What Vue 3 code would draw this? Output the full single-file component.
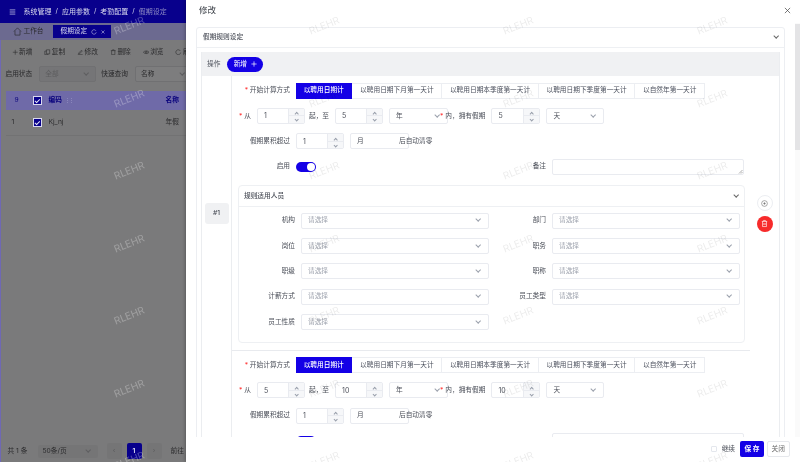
<template>
  <div class="screen">
    <!-- page behind the drawer, colours already dimmed by the mask -->
    <div class="page">
      <header class="topbar">
        <svg class="menu-icon" viewBox="0 0 10 8"><path d="M1 1h8M1 4h8M1 7h8" /></svg>
        <template v-for="(crumb, i) in crumbs" :key="crumb">
          <span v-if="i" class="crumb-sep">/</span>
          <span class="crumb" :class="{ last: i === crumbs.length - 1 }">{{ crumb }}</span>
        </template>
      </header>
      <div class="tabs">
        <div class="tab-home">
          <svg class="home-icon" viewBox="0 0 10 10"><path d="M1 5 5 1l4 4M2.200 4.200V9h5.600V4.200" /></svg>
          <span>工作台</span>
        </div>
        <div class="tab-active">
          <span>假期设定</span>
          <svg class="tab-icon" viewBox="0 0 8 8"><path d="M6.600 2.400A3 3 0 1 0 7 4.400" /></svg>
          <svg class="tab-icon" viewBox="0 0 8 8"><path d="m2 2 4 4M6 2 2 6" /></svg>
        </div>
      </div>
      <div class="toolbar">
        <span class="tool">
          <svg viewBox="0 0 8 8"><path d="M4 1v6M1 4h6" /></svg>新增
        </span>
        <span class="tool">
          <svg viewBox="0 0 8 8"><path d="M3 1h4v5H3zM3 2.500H1V7h4V6" /></svg>复制
        </span>
        <span class="tool">
          <svg viewBox="0 0 8 8"><path d="M1 7h6M2 5l3.500-3.500 1 1L3 6H2z" /></svg>修改
        </span>
        <span class="tool">
          <svg viewBox="0 0 8 8"><path d="M1 2h6M3 2V1h2v1M2 2v5h4V2" /></svg>删除
        </span>
        <span class="tool">
          <svg viewBox="0 0 8 8"><path d="M.5 4C2 1.800 6 1.800 7.500 4 6 6.200 2 6.200.5 4z" /><circle cx="4" cy="4" r="1" /></svg>浏览
        </span>
        <span class="tool">
          <svg viewBox="0 0 8 8"><path d="M6.600 2.400A3 3 0 1 0 7 4.400" /></svg>刷新
        </span>
      </div>
      <div class="filters">
        <span>启用状态</span>
        <div class="page-select disabled"><span>全部</span><i class="chev"></i></div>
        <span class="filter-label">快速查询</span>
        <div class="page-select"><span>名称</span><i class="chev"></i></div>
      </div>
      <div class="table">
        <div class="table-row table-head">
          <span class="col-seq">9</span>
          <span class="col-check"><i class="page-check"></i></span>
          <span class="col-code">编码<i class="sort"></i></span>
          <span>名称</span>
        </div>
        <div class="table-row">
          <span class="col-seq num">1</span>
          <span class="col-check"><i class="page-check"></i></span>
          <span class="col-code">Kj_nj</span>
          <span>年假</span>
        </div>
      </div>
      <div class="pager">
        <span class="pager-total">共 1 条</span>
        <div class="pager-size"><span>50条/页</span><i class="chev"></i></div>
        <span class="pager-btn">‹</span>
        <span class="pager-btn current">1</span>
        <span class="pager-btn">›</span>
        <span class="pager-goto">前往</span>
      </div>
    </div>

    <!-- drawer -->
    <aside class="drawer">
      <div class="drawer-title">
        <span>修改</span>
        <svg class="close-icon" viewBox="0 0 8 8"><path d="m1 1 6 6M7 1 1 7" /></svg>
      </div>
      <div class="drawer-body">
        <div class="drawer-scroll">
          <section class="card">
            <div class="card-head">
              <span>假期规则设定</span>
              <i class="chev"></i>
            </div>
            <div class="card-body">
              <div class="rule-table">
                <div class="ops">
                  <span>操作</span>
                  <button class="add-btn">新增<svg viewBox="0 0 8 8"><path d="M4 .5v7M.5 4h7" /></svg></button>
                </div>
                <div v-for="(rule, idx) in rules" :key="idx" class="rule">
                  <div class="rule-tag"><span v-if="!idx">#{{ idx + 1 }}</span></div>
                  <div class="rule-main">
                    <div class="row">
                      <label class="lab"><em>*</em> 开始计算方式</label>
                      <div class="btn-group">
                        <span
                          v-for="(m, i) in modes"
                          :key="m"
                          class="mode"
                          :class="{ on: i === 0 }"
                        >{{ m }}</span>
                      </div>
                    </div>
                    <div class="row">
                      <label class="lab short"><em>*</em> 从</label>
                      <div class="num-input"><span>{{ rule.from }}</span><div class="spin"><i class="up"></i><i></i></div></div>
                      <span class="text-mid">起，至</span>
                      <div class="num-input"><span>{{ rule.to }}</span><div class="spin"><i class="up"></i><i></i></div></div>
                      <div class="select unit"><span>年</span><i class="chev"></i></div>
                      <span class="text-own"><em>*</em> 内，拥有假期</span>
                      <div class="num-input wide"><span>{{ rule.days }}</span><div class="spin"><i class="up"></i><i></i></div></div>
                      <div class="select unit-day"><span>天</span><i class="chev"></i></div>
                    </div>
                    <div class="row">
                      <label class="lab">假期累积超过</label>
                      <div class="num-input"><span>1</span><div class="spin"><i class="up"></i><i></i></div></div>
                      <div class="select unit"><span>月</span></div>
                      <span class="text-clear">后自动清零</span>
                    </div>
                    <div class="row">
                      <label class="lab"><template v-if="!idx">启用</template></label>
                      <span class="switch"><i></i></span>
                      <label class="remark-label"><template v-if="!idx">备注</template></label>
                      <div class="remark">
                        <svg viewBox="0 0 5 5"><path d="M4.500 1 1 4.500M4.500 3 3 4.500" /></svg>
                      </div>
                    </div>
                    <section v-if="!idx" class="people">
                      <div class="people-head">
                        <span>规则适用人员</span>
                        <i class="chev"></i>
                      </div>
                      <div class="people-grid">
                        <div v-for="f in people" :key="f" class="field">
                          <label>{{ f }}</label>
                          <div class="select"><span class="ph">请选择</span><i class="chev"></i></div>
                        </div>
                      </div>
                    </section>
                  </div>
                  <div class="rule-actions">
                    <template v-if="!idx">
                      <span class="round">
                        <svg viewBox="0 0 10 10"><circle cx="5" cy="5" r="3.200" /><circle class="dot" cx="5" cy="5" r=".8" /></svg>
                      </span>
                      <span class="round danger">
                        <svg viewBox="0 0 10 10"><path d="M2 2.700h6M4 2.700V1.600h2v1.100M2.800 2.700v5.700h4.400V2.700M4.300 4.500v2.200M5.700 4.500v2.200" /></svg>
                      </span>
                    </template>
                  </div>
                </div>
              </div>
            </div>
          </section>
        </div>
        <div class="scrollbar"><div class="thumb"></div></div>
      </div>
      <footer class="drawer-foot">
        <span class="check-box"></span>
        <span class="continue">继续</span>
        <button class="save">保 存</button>
        <button class="cancel">关闭</button>
      </footer>
    </aside>

    <!-- watermark -->
    <div class="watermarks">
      <span v-for="n in 28" :key="n" class="mark">RLEHR</span>
    </div>
  </div>
</template>

<script setup>
const crumbs = ['系统管理', '应用参数', '考勤配置', '假期设定']

const modes = [
  '以聘用日期计',
  '以聘用日期下月第一天计',
  '以聘用日期本季度第一天计',
  '以聘用日期下季度第一天计',
  '以自然年第一天计'
]

const rules = [
  { from: 1, to: 5, days: 5 },
  { from: 5, to: 10, days: 10 }
]

const people = ['机构', '部门', '岗位', '职务', '职级', '职称', '计薪方式', '员工类型', '员工性质']
</script>

<style>
html,
body {
  margin: 0;
  overflow: hidden;
}
</style>

<style scoped>
.screen {
  position: relative;
  width: 800px;
  height: 462px;
  overflow: hidden;
  background: #fff;
  color: #4a4e58;
  font-family: Inter, "Noto Sans CJK SC", sans-serif;
  font-size: 6.7px;
  line-height: 1;
  /* the reference is a downscaled capture, everything is a little soft */
  filter: blur(0.3px);
}

i,
em {
  font-style: normal;
}

em {
  color: #f33;
}

svg {
  display: block;
  fill: none;
  stroke: currentColor;
}

.chev {
  display: block;
  width: 3.400px;
  height: 3.400px;
  margin-top: -2px;
  border-right: 0.8px solid #9aa0ac;
  border-bottom: 0.8px solid #9aa0ac;
  transform: rotate(45deg);
}

/* ---------- page behind ---------- */
.page {
  display: flex;
  flex-direction: column;
  width: 800px;
  height: 462px;
  box-sizing: border-box;
  border-left: 1.500px solid #6f68b4;
  background: #7a7a7b;
  color: #2a2a2c;
}

.page .chev {
  border-color: #5e5e60;
}

.topbar {
  display: flex;
  align-items: center;
  height: 23px;
  margin-left: -1.500px;
  padding-left: 9px;
  background: #08008c;
  color: #d8d8ee;
}

.menu-icon {
  width: 7px;
  height: 6px;
  margin-right: 8px;
  stroke-width: 1;
}

.crumb {
  font-size: 7px;
}

.crumb.last {
  color: #8f8bc4;
}

.crumb-sep {
  margin: 0 4px;
}

.tabs {
  display: flex;
  align-items: center;
  height: 17px;
  margin-left: -1.500px;
  padding-left: 13px;
  background: #6c6a90;
}

.tab-home {
  display: flex;
  align-items: center;
  gap: 2px;
  width: 40px;
}

.home-icon {
  width: 9px;
  height: 9px;
  stroke-width: 0.7;
}

.tab-active {
  display: flex;
  align-items: center;
  height: 13px;
  width: 58px;
  box-sizing: border-box;
  padding-left: 8px;
  background: #08008c;
  color: #d8d8ee;
}

.tab-icon {
  width: 6px;
  height: 6px;
  margin-left: 3.500px;
  stroke-width: 0.7;
}

.toolbar {
  display: flex;
  align-items: center;
  height: 24px;
  padding-left: 10.500px;
}

.tool {
  display: flex;
  align-items: center;
  gap: 1px;
  width: 32.800px;
}

.tool svg {
  width: 6.500px;
  height: 6.500px;
  stroke-width: 0.7;
}

.filters {
  display: flex;
  align-items: center;
  height: 16px;
  margin-top: 2px;
  padding-left: 4.500px;
}

.page-select {
  display: flex;
  align-items: center;
  justify-content: space-between;
  width: 57px;
  height: 16px;
  box-sizing: border-box;
  margin-left: 7px;
  padding: 0 7px 0 5px;
  border: 1px solid #707072;
  border-radius: 2px;
  background: #7d7d7e;
}

.page-select.disabled {
  background: #757577;
  color: #5c5c5e;
}

.filter-label {
  margin-left: 5px;
}

.table {
  flex: 1;
  margin: 9px 0 0 4.500px;
}

.table-row {
  display: flex;
  align-items: center;
  height: 25px;
  border-bottom: 1px solid #727273;
}

.table-head {
  height: 19px;
  background: #6f6aa8;
  border-bottom: 0;
  color: #08007c;
  font-weight: 600;
}

.col-seq {
  width: 27px;
  padding-left: 9px;
  box-sizing: border-box;
  font-weight: 400;
}

.col-seq.num {
  padding-left: 6px;
  color: #2a2a2c;
}

.col-check {
  width: 16px;
}

.col-code {
  display: flex;
  align-items: center;
  width: 117px;
}

.sort {
  width: 3px;
  height: 5px;
  margin-left: 5px;
  border-left: 1px dotted #8a86bb;
  border-right: 1px dotted #8a86bb;
}

.page-check {
  position: relative;
  display: block;
  width: 7px;
  height: 7px;
  background: #08008c;
  border: 0.5px solid #d8d8ee;
}

.page-check::after {
  content: "";
  position: absolute;
  top: 0.8px;
  left: 2.300px;
  width: 2px;
  height: 3.500px;
  border-right: 0.8px solid #e8e8f6;
  border-bottom: 0.8px solid #e8e8f6;
  transform: rotate(45deg);
}

.pager {
  display: flex;
  align-items: center;
  height: 22px;
  padding-left: 6.500px;
}

.pager-total {
  flex: none;
  width: 21px;
  white-space: nowrap;
}

.pager-size {
  display: flex;
  align-items: center;
  justify-content: space-between;
  width: 60px;
  height: 13px;
  box-sizing: border-box;
  margin: 0 9px;
  padding: 0 7px 0 5px;
  background: #757576;
  border-radius: 2px;
}

.pager-btn {
  display: flex;
  align-items: center;
  justify-content: center;
  width: 15px;
  height: 16px;
  margin-right: 5px;
  background: #757576;
  border-radius: 2px;
  color: #5c5c5e;
}

.pager-btn.current {
  background: #08008c;
  color: #e8e8f6;
  font-weight: 600;
}

.pager-goto {
  margin-left: 4px;
}

/* ---------- drawer ---------- */
.drawer {
  position: absolute;
  top: 0;
  right: 0;
  bottom: 0;
  display: flex;
  flex-direction: column;
  width: 614px;
  background: #fff;
  box-shadow: -1px 0 3px rgba(0, 0, 0, 0.25);
}

.drawer-title {
  display: flex;
  align-items: center;
  justify-content: space-between;
  flex: none;
  height: 23px;
  padding: 0 9.500px 3px 13px;
  box-sizing: border-box;
  font-size: 8.500px;
  color: #3c4048;
}

.close-icon {
  width: 7px;
  height: 7px;
  stroke-width: 0.8;
  color: #444;
}

.drawer-body {
  display: flex;
  flex: 1;
  min-height: 0;
}

.drawer-scroll {
  flex: 1;
  min-width: 0;
  padding: 4px 10px 0;
  overflow: hidden;
}

.scrollbar {
  flex: none;
  width: 5px;
  padding-top: 1px;
  background: #fafafa;
}

.thumb {
  height: 126px;
  background: #e4e4e6;
}

.card {
  border: 1px solid #eceef2;
  border-radius: 3px;
}

.card-head {
  display: flex;
  align-items: center;
  justify-content: space-between;
  height: 20px;
  box-sizing: border-box;
  padding: 0 6px;
  border-bottom: 1px solid #eef0f3;
  font-weight: 500;
}

.card-head .chev,
.people-head .chev {
  border-color: #666;
}

.card-body {
  padding: 4px;
}

.rule-table {
  border: 1px solid #ebedf0;
  border-bottom: 0;
  border-top: 0;
}

.ops {
  display: flex;
  align-items: center;
  gap: 7px;
  height: 24px;
  padding-left: 5px;
  background: #f0f1f3;
}

.add-btn {
  display: flex;
  align-items: center;
  justify-content: center;
  gap: 4px;
  width: 36px;
  height: 15px;
  padding: 0;
  border: 0;
  border-radius: 8px;
  background: #1400e6;
  color: #fff;
  font: inherit;
}

.add-btn svg {
  width: 6px;
  height: 6px;
  stroke-width: 0.9;
}

.rule {
  display: flex;
}

.rule-tag {
  display: flex;
  align-items: center;
  justify-content: center;
  flex: none;
  width: 30px;
  box-sizing: border-box;
  border-right: 1px solid #ebedf0;
}

.rule-tag span {
  display: flex;
  align-items: center;
  justify-content: center;
  width: 24px;
  height: 21px;
  background: #f0f1f3;
  border-radius: 3px;
  font-weight: 500;
}

.rule-main {
  flex: 1;
  min-width: 0;
  height: 274.500px;
  box-sizing: border-box;
  padding-top: 6.500px;
  border-bottom: 1px solid #e8eaee;
}

.rule-actions {
  display: flex;
  flex-direction: column;
  align-items: center;
  justify-content: center;
  gap: 4.500px;
  flex: none;
  width: 29px;
}

.round {
  display: flex;
  align-items: center;
  justify-content: center;
  width: 16px;
  height: 16px;
  box-sizing: border-box;
  border: 1px solid #eceef2;
  border-radius: 50%;
  color: #777;
}

.round svg {
  width: 9px;
  height: 9px;
  stroke-width: 0.7;
}

.round .dot {
  fill: currentColor;
}

.round.danger {
  border: 0;
  background: #f72b2b;
  color: #fff;
}

.row {
  display: flex;
  align-items: center;
  height: 16px;
  margin-bottom: 9.400px;
  white-space: nowrap;
}

.lab {
  flex: none;
  width: 58px;
  margin-right: 6px;
  text-align: right;
}

.lab.short {
  width: 19px;
}

.btn-group {
  display: flex;
}

.mode {
  display: flex;
  align-items: center;
  height: 16px;
  box-sizing: border-box;
  padding: 0 7.600px 0 7.700px;
  border: 1px solid #eceef2;
  border-left-width: 0;
  background: #fff;
  color: #4a4f5c;
}

.mode.on {
  border-color: #1400e6;
  background: #1400e6;
  color: #fff;
  font-weight: 500;
}

.num-input {
  position: relative;
  display: flex;
  align-items: center;
  flex: none;
  width: 48px;
  height: 16px;
  box-sizing: border-box;
  padding-left: 6px;
  border: 1px solid #e9ebf0;
  border-radius: 2px;
  font-size: 7px;
}

.num-input.wide {
  width: 49px;
  margin-right: 6px;
}

.spin {
  position: absolute;
  top: 0;
  right: 0;
  bottom: 0;
  display: flex;
  flex-direction: column;
  width: 15px;
  background: #f6f7f9;
  border-left: 1px solid #e9ebf0;
}

.spin i {
  position: relative;
  flex: 1;
}

.spin i + i {
  border-top: 1px solid #e9ebf0;
}

.spin i::after {
  content: "";
  position: absolute;
  top: 1.800px;
  left: 5.500px;
  width: 2.400px;
  height: 2.400px;
  border-right: 0.7px solid #9aa0ac;
  border-bottom: 0.7px solid #9aa0ac;
  transform: rotate(45deg);
}

.spin i.up::after {
  top: 3.400px;
  transform: rotate(225deg);
}

.text-mid {
  margin: 0 6px 0 4px;
}

.select {
  display: flex;
  align-items: center;
  justify-content: space-between;
  flex: none;
  box-sizing: border-box;
  height: 16px;
  padding: 0 8px 0 6px;
  border: 1px solid #e9ebf0;
  border-radius: 2px;
  background: #fff;
}

.select.unit {
  width: 59px;
  margin-left: 6px;
}

.select.unit-day {
  width: 58px;
}

.text-own {
  position: relative;
  margin: 0 6px 0 -8px;
}

.text-clear {
  position: relative;
  margin-left: -10px;
}

.switch {
  position: relative;
  display: block;
  flex: none;
  width: 20px;
  height: 10px;
  background: #1400e6;
  border-radius: 5px;
}

.switch i {
  position: absolute;
  top: 1px;
  right: 1px;
  width: 8px;
  height: 8px;
  background: #fff;
  border-radius: 50%;
}

.remark-label {
  margin-left: auto;
  margin-right: 6px;
}

.remark {
  display: flex;
  align-items: flex-end;
  justify-content: flex-end;
  flex: none;
  width: 192px;
  height: 16px;
  box-sizing: border-box;
  margin-right: 6px;
  border: 1px solid #e9ebf0;
  border-radius: 2px;
}

.remark svg {
  width: 5px;
  height: 5px;
  stroke-width: 0.6;
  color: #777;
}

.people {
  height: 158px;
  box-sizing: border-box;
  margin: 10.500px 5px 0 6px;
  border: 1px solid #eef0f3;
  border-radius: 4px;
}

.people-head {
  display: flex;
  align-items: center;
  justify-content: space-between;
  height: 20px;
  padding: 0 6px 0 5px;
  border-bottom: 1px solid #eef0f3;
  font-weight: 500;
}

.people-grid {
  display: grid;
  grid-template-columns: repeat(2, 251px);
  row-gap: 9.300px;
  padding-top: 5.500px;
}

.field {
  display: flex;
  align-items: center;
  gap: 6px;
}

.field label {
  flex: none;
  width: 56px;
  text-align: right;
}

.field .select {
  width: 188px;
}

.ph {
  color: #9ea3ae;
}

/* ---------- footer ---------- */
.drawer-foot {
  position: relative;
  display: flex;
  align-items: center;
  justify-content: flex-end;
  flex: none;
  height: 25px;
  box-sizing: border-box;
  padding: 0 10.500px 1px 0;
  background: #fff;
}

.check-box {
  width: 6px;
  height: 6px;
  box-sizing: border-box;
  border: 1px solid #e4e7ed;
  border-radius: 1px;
}

.continue {
  margin: 0 5px;
}

.save,
.cancel {
  height: 16px;
  padding: 0;
  border-radius: 2px;
  font: inherit;
}

.save {
  width: 24px;
  margin-right: 3px;
  border: 0;
  background: #1400e6;
  color: #fff;
  font-weight: 600;
}

.cancel {
  width: 22.500px;
  box-sizing: border-box;
  border: 1px solid #e6e8ec;
  background: #fff;
  color: #666;
}

/* ---------- watermark ---------- */
.watermarks {
  position: absolute;
  top: -11px;
  left: 32px;
  display: grid;
  grid-template-columns: repeat(4, 194.4px);
  grid-auto-rows: 72.5px;
  pointer-events: none;
}

.mark {
  align-self: center;
  justify-self: center;
  transform: rotate(-22deg);
  font-size: 10px;
  color: rgba(0, 0, 0, 0.08);
}

.mark:nth-child(4n + 1) {
  color: rgba(255, 255, 255, 0.28);
}
</style>
